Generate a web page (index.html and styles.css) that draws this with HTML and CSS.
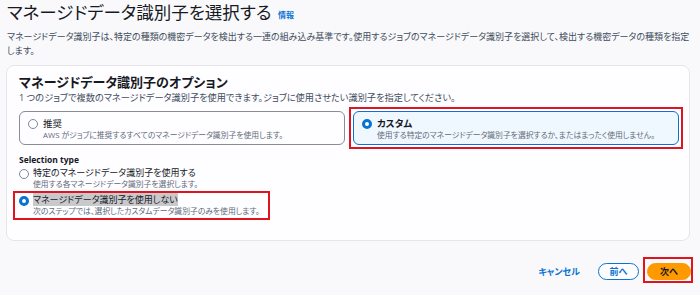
FILE: index.html
```html
<!DOCTYPE html>
<html lang="ja">
<head>
<meta charset="utf-8">
<link rel="stylesheet" href="styles.css">
</head>
<body>
<div class="page">
  <header class="head">
    <h1 class="title">マネージドデータ識別子を選択する <a class="info">情報</a></h1>
    <p class="desc">マネージドデータ識別子は、特定の種類の機密データを検出する一連の組み込み基準です。使用するジョブのマネージドデータ識別子を選択して、検出する機密データの種類を指定します。</p>
  </header>

  <section class="card">
    <h2 class="card-title">マネージドデータ識別子のオプション</h2>
    <p class="card-sub">1 つのジョブで複数のマネージドデータ識別子を使用できます。ジョブに使用させたい識別子を指定してください。</p>

    <div class="tiles">
      <div class="tile">
        <span class="radio"></span>
        <div class="tile-text">
          <div class="tile-label">推奨</div>
          <div class="tile-desc">AWS がジョブに推奨するすべてのマネージドデータ識別子を使用します。</div>
        </div>
      </div>
      <div class="tile tile-on marked">
        <span class="radio radio-on"></span>
        <div class="tile-text">
          <div class="tile-label bold">カスタム</div>
          <div class="tile-desc">使用する特定のマネージドデータ識別子を選択するか、またはまったく使用しません。</div>
        </div>
      </div>
    </div>

    <div class="sel-title">Selection type</div>
    <div class="options">
      <div class="option">
        <span class="radio"></span>
        <div>
          <div class="opt-label">特定のマネージドデータ識別子を使用する</div>
          <div class="opt-desc">使用する各マネージドデータ識別子を選択します。</div>
        </div>
      </div>
      <div class="option marked-opt">
        <span class="radio radio-on"></span>
        <div>
          <div class="opt-label"><span class="selected-text">マネージドデータ識別子を使用しない</span></div>
          <div class="opt-desc">次のステップでは、選択したカスタムデータ識別子のみを使用します。</div>
        </div>
      </div>
    </div>
  </section>

  <footer class="actions">
    <a class="cancel">キャンセル</a>
    <button class="btn btn-outline">前へ</button>
    <button class="btn btn-primary marked-btn">次へ</button>
  </footer>
</div>
</body>
</html>
```

FILE: styles.css
```css
* { box-sizing: border-box; }
html, body { margin: 0; padding: 0; }
body {
  background: #f9f9fb;
  color: #16191f;
  font-family: "Open Sans", "Noto Sans CJK JP", sans-serif;
  font-feature-settings: "palt";
  width: 700px;
  height: 295px;
  overflow: hidden;
}
.head { padding: 0 7px; }
.title {
  margin: 0;
  font-size: 17.5px;
  line-height: 25px;
  font-weight: 400;
}
.info {
  font-size: 8px;
  font-weight: 700;
  color: #0972d3;
  vertical-align: 1px;
  margin-left: 2px;
}
.desc {
  margin: 3px 0 0;
  font-size: 9px;
  line-height: 14px;
  color: #414d5c;
}
.card {
  margin: 7px 10px 0 6px;
  background: #fefdff;
  border: 1px solid #e6e6ea;
  border-radius: 8px;
  padding: 7px 10px 18px 12px;
  height: 176px;
}
.card-title {
  margin: 0;
  font-size: 13px;
  line-height: 18px;
  font-weight: 700;
}
.card-sub {
  margin: 0;
  font-size: 9.2px;
  line-height: 13px;
  color: #414d5c;
}
.tiles {
  display: grid;
  grid-template-columns: 1fr 1fr;
  gap: 8px;
  margin-top: 7px;
}
.tile {
  position: relative;
  display: flex;
  align-items: flex-start;
  gap: 5px;
  border: 1px solid #8c8c94;
  border-radius: 6px;
  padding: 5px 8px 4px;
  height: 34px;
  background: #fefdff;
}
.tile-on {
  border-color: #0972d3;
  background: #f0f8ff;
  border-width: 1.5px;
}
.marked::after {
  content: "";
  position: absolute;
  inset: -5px;
  border: 2px solid #e0141e;
  pointer-events: none;
}
.radio {
  flex: none;
  width: 10px;
  height: 10px;
  border-radius: 50%;
  border: 1px solid #7d8998;
  background: #fff;
  margin-top: 2px;
}
.radio-on {
  border: 3px solid #0972d3;
}
.tile-label {
  font-size: 9.5px;
  line-height: 13px;
}
.bold { font-weight: 700; }
.tile-desc {
  font-size: 7.8px;
  line-height: 11px;
  color: #5f6b7a;
}
.sel-title {
  margin-top: 9px;
  font-size: 8.5px;
  line-height: 12px;
  font-weight: 700;
}
.options {
  display: flex;
  flex-direction: column;
  align-items: flex-start;
  gap: 4px;
  margin-top: 1px;
}
.option {
  position: relative;
  display: flex;
  align-items: flex-start;
  gap: 4px;
}
.option .radio { margin-top: 1.5px; }
.opt-label {
  font-size: 9px;
  line-height: 12px;
}
.opt-desc {
  font-size: 7.8px;
  line-height: 11px;
  color: #5f6b7a;
}
.marked-opt::after {
  content: "";
  position: absolute;
  top: -3px;
  bottom: -3px;
  left: -6px;
  right: -10px;
  border: 2px solid #e0141e;
  pointer-events: none;
}
.selected-text {
  background: #c9c9cc;
}
.actions {
  display: flex;
  justify-content: flex-end;
  align-items: center;
  gap: 8px;
  margin-top: 22px;
  padding-right: 9px;
}
.cancel {
  font-size: 9px;
  font-weight: 700;
  color: #0972d3;
  margin-right: 10px;
}
.btn {
  font-family: inherit;
  font-feature-settings: "palt";
  font-size: 9px;
  font-weight: 700;
  height: 17px;
  border-radius: 9px;
  padding: 0 10px;
  line-height: 13px;
}
.btn-outline {
  width: 41px;
  background: #fefdff;
  color: #0972d3;
  border: 1.5px solid #0972d3;
}
.btn-primary {
  position: relative;
  width: 44px;
  background: #ff9900;
  color: #0f141a;
  border: 1px solid #ff9900;
}
.marked-btn::after {
  content: "";
  position: absolute;
  top: -7px;
  bottom: -4px;
  left: -5px;
  right: -3px;
  border: 2px solid #e0141e;
  pointer-events: none;
}
```
